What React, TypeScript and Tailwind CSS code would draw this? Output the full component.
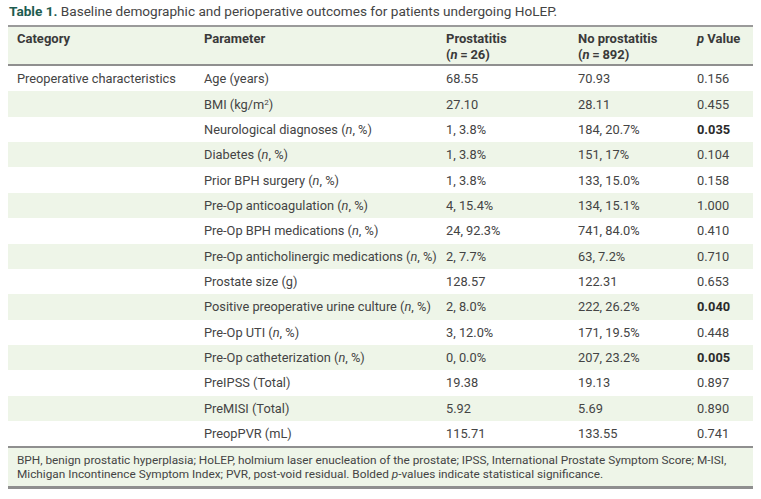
import type { ReactNode } from "react";

type Row = {
  category?: string;
  parameter: ReactNode;
  prostatitis: string;
  noProstatitis: string;
  p: string;
  bold?: boolean;
};

const n = <i>n</i>;

const ROWS: Row[] = [
  { category: "Preoperative characteristics", parameter: "Age (years)", prostatitis: "68.55", noProstatitis: "70.93", p: "0.156" },
  { parameter: <>BMI (kg/m<sup className="text-[8px]">2</sup>)</>, prostatitis: "27.10", noProstatitis: "28.11", p: "0.455" },
  { parameter: <>Neurological diagnoses ({n}, %)</>, prostatitis: "1, 3.8%", noProstatitis: "184, 20.7%", p: "0.035", bold: true },
  { parameter: <>Diabetes ({n}, %)</>, prostatitis: "1, 3.8%", noProstatitis: "151, 17%", p: "0.104" },
  { parameter: <>Prior BPH surgery ({n}, %)</>, prostatitis: "1, 3.8%", noProstatitis: "133, 15.0%", p: "0.158" },
  { parameter: <>Pre-Op anticoagulation ({n}, %)</>, prostatitis: "4, 15.4%", noProstatitis: "134, 15.1%", p: "1.000" },
  { parameter: <>Pre-Op BPH medications ({n}, %)</>, prostatitis: "24, 92.3%", noProstatitis: "741, 84.0%", p: "0.410" },
  { parameter: <>Pre-Op anticholinergic medications ({n}, %)</>, prostatitis: "2, 7.7%", noProstatitis: "63, 7.2%", p: "0.710" },
  { parameter: "Prostate size (g)", prostatitis: "128.57", noProstatitis: "122.31", p: "0.653" },
  { parameter: <>Positive preoperative urine culture ({n}, %)</>, prostatitis: "2, 8.0%", noProstatitis: "222, 26.2%", p: "0.040", bold: true },
  { parameter: <>Pre-Op UTI ({n}, %)</>, prostatitis: "3, 12.0%", noProstatitis: "171, 19.5%", p: "0.448" },
  { parameter: <>Pre-Op catheterization ({n}, %)</>, prostatitis: "0, 0.0%", noProstatitis: "207, 23.2%", p: "0.005", bold: true },
  { parameter: "PreIPSS (Total)", prostatitis: "19.38", noProstatitis: "19.13", p: "0.897" },
  { parameter: "PreMISI (Total)", prostatitis: "5.92", noProstatitis: "5.69", p: "0.890" },
  { parameter: "PreopPVR (mL)", prostatitis: "115.71", noProstatitis: "133.55", p: "0.741" },
];

const GRID = "grid grid-cols-[187px_242px_132px_119px_1fr]";

export default function App() {
  return (
    <div
      className="h-[499px] w-[761px] bg-white px-2 pt-[3px] text-[#444]"
      style={{ fontFamily: "Roboto, 'Liberation Sans', sans-serif" }}
    >
      <p className="pl-px text-[13.6px] leading-[16px]">
        <b className="font-bold text-[#1e5c50]">Table 1.</b>{" "}
        Baseline demographic and perioperative outcomes for patients undergoing HoLEP.
      </p>

      <div className="mt-[6px] border-t-2 border-[#9a9a9a]">
        <div className={`${GRID} h-[39px] border-b-2 border-[#8f8f8f] bg-[#eef5e8] pt-[4px] text-[13px] font-bold leading-[15.5px] text-[#3a3a3a]`}>
          <div className="pl-[9px]">Category</div>
          <div className="pl-[9px]">Parameter</div>
          <div className="pl-[9px]">
            Prostatitis
            <br />(<i>n</i>&thinsp;=&thinsp;26)
          </div>
          <div className="pl-[9px]">
            No prostatitis
            <br />(<i>n</i>&thinsp;=&thinsp;892)
          </div>
          <div className="pl-[9px]">
            <i>p</i> Value
          </div>
        </div>

        {ROWS.map((row, i) => (
          <div
            key={i}
            className={`${GRID} h-[25.36px] items-center whitespace-nowrap text-[12.8px] leading-[15px] ${i % 2 === 1 ? "bg-[#eef5e8]" : "bg-white"}`}
          >
            <div className="pl-[9px]">{row.category}</div>
            <div className="pl-[9px]">{row.parameter}</div>
            <div className="pl-[9px]">{row.prostatitis}</div>
            <div className="pl-[9px]">{row.noProstatitis}</div>
            <div className={`pl-[9px] ${row.bold ? "font-bold text-[#2a2a2a]" : ""}`}>{row.p}</div>
          </div>
        ))}

        <div className="whitespace-nowrap border-t-2 border-b-[3px] border-[#8f8f8f] bg-[#eef5e8] px-[9px] pb-[5px] pt-[6px] text-[11.8px] leading-[13.5px]">
          BPH, benign prostatic hyperplasia; HoLEP, holmium laser enucleation of the prostate; IPSS, International Prostate Symptom Score; M-ISI,
          <br />
          Michigan Incontinence Symptom Index; PVR, post-void residual. Bolded <i>p</i>-values indicate statistical significance.
        </div>
      </div>
    </div>
  );
}
